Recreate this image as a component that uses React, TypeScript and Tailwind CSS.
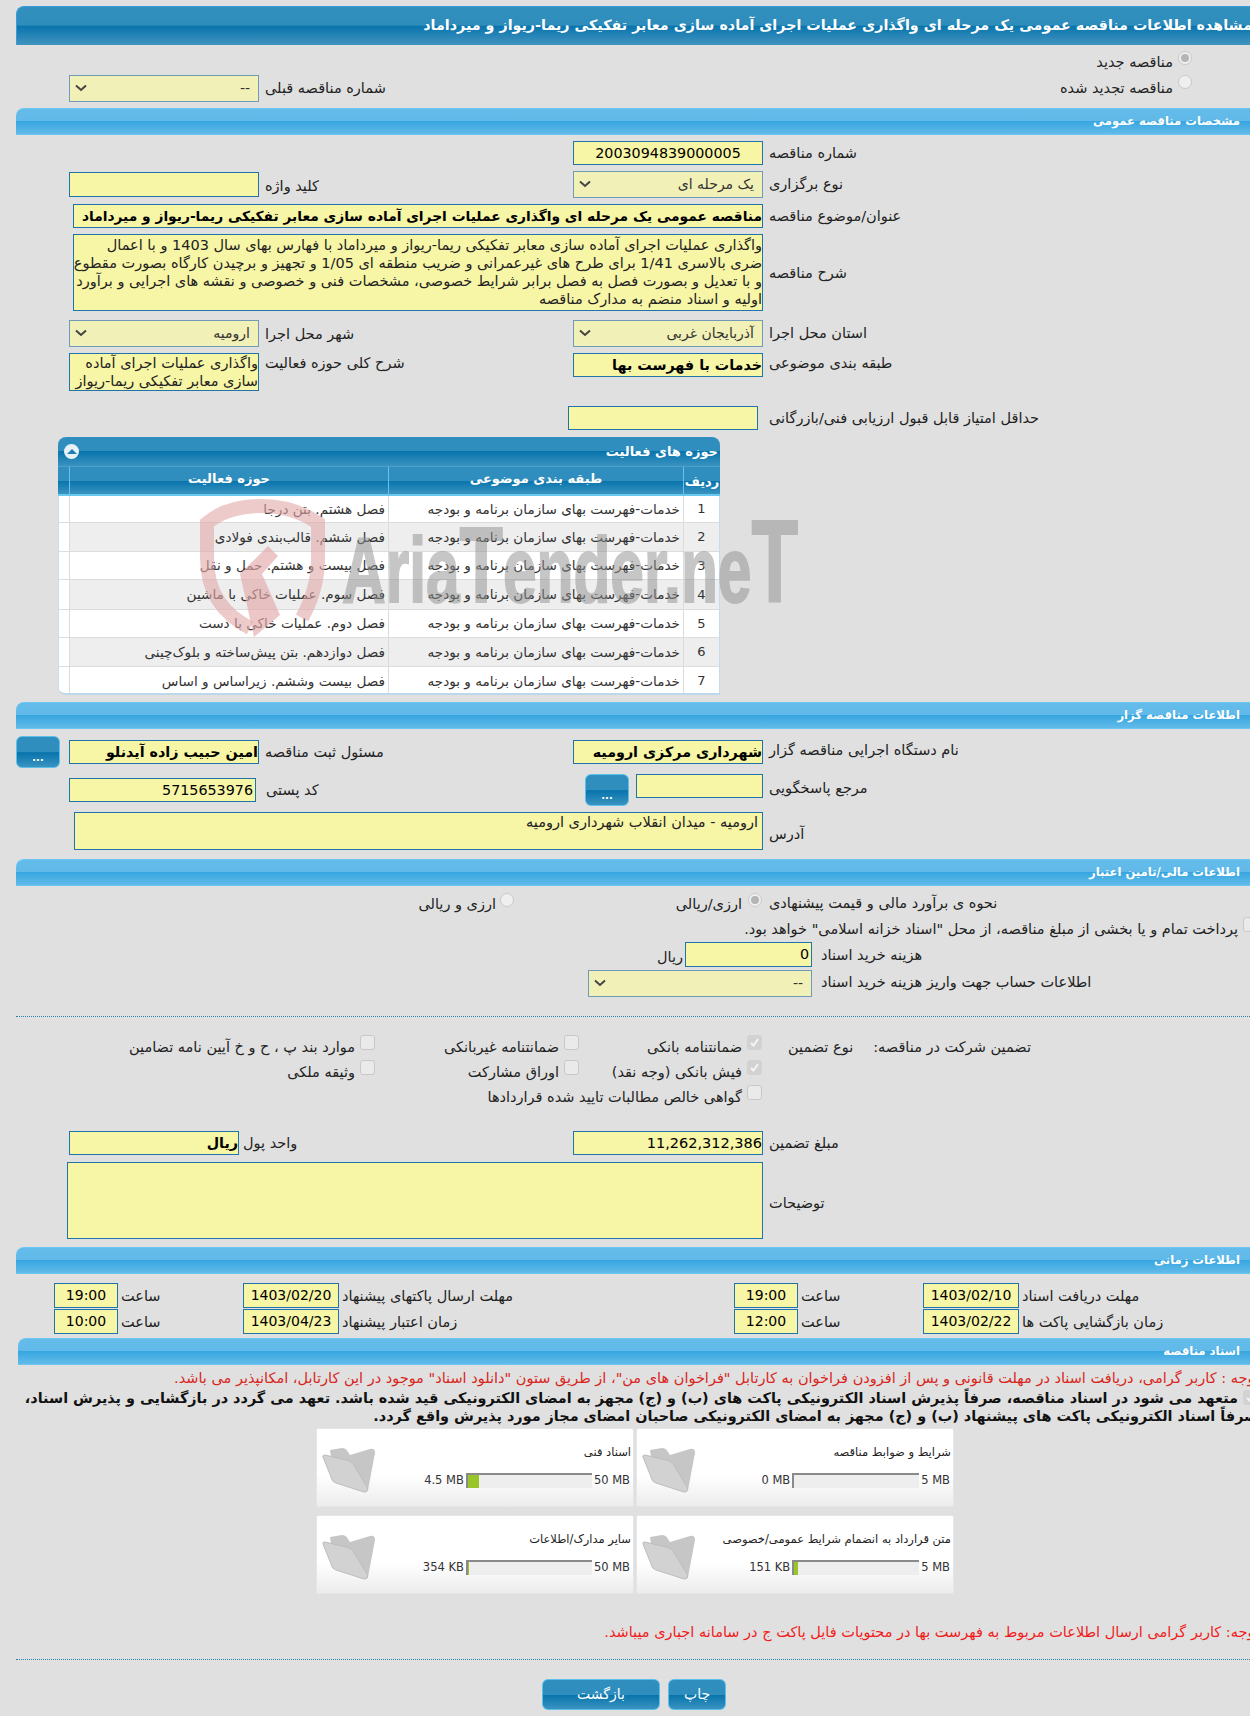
import type { ReactNode } from "react";

const font = "font-['DejaVu_Sans',sans-serif]";

function SectionBar({ title, className = "" }: { title: string; className?: string }) {
    return (
        <div className={`ml-[16px] h-[27px] rounded-tl-[8px] border-t border-[#6cc6f2] border-b bg-[linear-gradient(#63bcea_0%,#60b9e8_48%,#37a6e0_50%,#62bbe9_100%)] flex items-center justify-end pr-[24px] ${className}`}>
            <span dir="rtl" className="text-white font-bold text-[11.6px]">{title}</span>
        </div>
    );
}

function Label({ children, className = "" }: { children: ReactNode; className?: string }) {
    return <div dir="rtl" className={`w-fit whitespace-nowrap text-[14.5px] leading-[18px] text-[#222] ${className}`}>{children}</div>;
}

function Field({ children, className = "", bold = false }: { children?: ReactNode; className?: string; bold?: boolean }) {
    return (
        <div dir="rtl" className={`h-[24px] border border-[#1f75a8] bg-[#f7f5a6] text-[14.3px] leading-[22px] text-black whitespace-nowrap overflow-hidden ${bold ? "font-bold" : ""} ${className}`}>
            {children}
        </div>
    );
}

function SelectBox({ value, className = "" }: { value: string; className?: string }) {
    return (
        <div className={`h-[27px] border border-[#6f9ab8] bg-[#f1f0b6] flex items-center justify-between pl-[5px] pr-[8px] ${className}`}>
            <svg width="12" height="8" viewBox="0 0 12 8" className="mt-[-2px]">
                <polyline points="1,1.5 6,6 11,1.5" fill="none" stroke="#444" strokeWidth="2" />
            </svg>
            <span dir="rtl" className="text-[14px] text-[#333] whitespace-nowrap">{value}</span>
        </div>
    );
}

function Radio({ checked = false }: { checked?: boolean }) {
    return (
        <span className="inline-flex w-[14px] h-[14px] shrink-0 rounded-full border border-[#c9c9c9] bg-[#efefef] items-center justify-center">
            {checked && <span className="w-[8px] h-[8px] rounded-full bg-[#b5b5b5]" />}
        </span>
    );
}

function Check({ checked = false, className = "" }: { checked?: boolean; className?: string }) {
    return (
        <span className={`inline-flex w-[15px] h-[15px] shrink-0 rounded-[3px] border items-center justify-center ${checked ? "bg-[#d2d2d2] border-[#d2d2d2]" : "bg-[#eaeaea] border-[#c8c8c8]"} ${className}`}>
            {checked && (
                <svg width="11" height="11" viewBox="0 0 11 11">
                    <polyline points="2,6 4.5,8.5 9,2" fill="none" stroke="#f5f5f5" strokeWidth="2" />
                </svg>
            )}
        </span>
    );
}

function TwoCol({ children, className = "" }: { children: ReactNode; className?: string }) {
    return <div className={`grid grid-cols-[69px_190px_314px_190px_1fr] ${className}`}>{children}</div>;
}

function DarkBtn({ children, className = "" }: { children: ReactNode; className?: string }) {
    return (
        <div dir="rtl" className={`rounded-[6px] border border-[#5cc0ea] bg-[linear-gradient(#2f8ebd_0%,#2f8ebd_50%,#0874ac_52%,#3a93c0_100%)] text-white flex items-center justify-center text-[14px] ${className}`}>
            {children}
        </div>
    );
}

function Folder() {
    return (
        <svg width="54" height="46" viewBox="0 0 54 46" className="shrink-0">
            <path d="M8 3 L20 1 Q24 1 26 5 L28 8 L48 2 Q53 1 53 6 L46 43 Q45 46 41 44 L12 32 Z" fill="#c6c6c6" />
            <path d="M1 10 Q0 8 3 8 L24 13 Q30 14 33 20 L45 40 Q47 45 42 45 L14 36 Q10 35 9 30 Z" fill="#d2d2d2" stroke="#bdbdbd" strokeWidth="1" />
        </svg>
    );
}

function DocCard({ title, used, max, fill, barW }: { title: string; used: string; max: string; fill: number; barW: string }) {
    return (
        <div className="h-[79px] flex rounded-[2px] border border-[#e6e6e6] bg-[linear-gradient(#ffffff_0%,#ffffff_60%,#ececec_100%)]">
            <div className="pl-[5px] pt-[18px]"><Folder /></div>
            <div className="flex-1 flex flex-col items-end pr-[2px]">
                <div dir="rtl" className="mt-[15px] text-[11.5px] leading-[16px] text-[#222] whitespace-nowrap">{title}</div>
                <div className="mt-[12px] flex items-center gap-[2px] text-[11.5px] text-[#333] whitespace-nowrap pr-[1px]">
                    <span>{used}</span>
                    <div className={`h-[15px] ${barW} bg-[#eeeeee] border-t-2 border-l-2 border-[#8a8a8a]`}>
                        <div className="h-full bg-[#98c628]" style={{ width: `${fill}%` }} />
                    </div>
                    <span>{max}</span>
                </div>
            </div>
        </div>
    );
}

const activityRows = [
    "فصل هشتم. بتن درجا",
    "فصل ششم. قالب‌بندی فولادی",
    "فصل بیست و هشتم. حمل و نقل",
    "فصل سوم. عملیات خاکی با ماشین",
    "فصل دوم. عملیات خاکی با دست",
    "فصل دوازدهم. بتن پیش‌ساخته و بلوک‌چینی",
    "فصل بیست وششم. زیراساس و اساس",
];

const rowHeights = ["h-[27px]", "h-[29px]", "h-[28px]", "h-[30px]", "h-[28px]", "h-[29px]", "h-[28px]"];

function ActivityPanel() {
    return (
        <div className="ml-[58px] mt-[7px] w-[662px] h-[258px] rounded-t-[8px] rounded-bl-[8px] overflow-hidden border-b-2 border-[#bcd8ea]">
            <div className="h-[30px] flex items-center justify-between pl-[6px] pr-[2px] border-b border-[#4f9fc9] bg-[linear-gradient(#2f8ebd_0%,#2f8ebd_48%,#0874ac_50%,#3a93c0_100%)]">
                <span className="w-[15px] h-[15px] rounded-full bg-[#e8f1f6] flex items-center justify-center">
                    <span className="w-0 h-0 border-x-[5px] border-x-transparent border-b-[5px] border-b-[#1d7fb3]" />
                </span>
                <span dir="rtl" className="text-white font-bold text-[13px]">حوزه های فعالیت</span>
            </div>
            <div className="grid grid-cols-[12px_319px_295px_36px] h-[29px] border-b-2 border-[#68c8ee] bg-[linear-gradient(#2f8ebd_0%,#2f8ebd_50%,#0874ac_52%,#3a93c0_100%)] text-white font-bold text-[13px] text-center">
                <div className="border-r border-[#6cbfe6]" />
                <div dir="rtl" className="border-r border-[#6cbfe6] leading-[24px]">حوزه فعالیت</div>
                <div dir="rtl" className="border-r border-[#6cbfe6] leading-[24px]">طبقه بندی موضوعی</div>
                <div dir="rtl" className="leading-[30px]">ردیف</div>
            </div>
            <div className="border-x border-[#c7dcea]">
                {activityRows.map((row, i) => (
                    <div key={row} className={`grid grid-cols-[11px_319px_295px_35px] ${rowHeights[i]} bg-white text-[13.6px] text-[#333] border-b border-[#dcdcdc] last:border-b-0`}>
                        <div className="border-r border-[#dcdcdc]" />
                        <div dir="rtl" className={`border-r border-[#dcdcdc] px-[3px] flex items-center whitespace-nowrap ${i % 2 ? "bg-[#eeeeee]" : ""}`}>{row}</div>
                        <div dir="rtl" className={`border-r border-[#dcdcdc] px-[3px] flex items-center whitespace-nowrap ${i % 2 ? "bg-[#eeeeee]" : ""}`}>خدمات-فهرست بهای سازمان برنامه و بودجه</div>
                        <div className={`flex items-center justify-center text-[13px] ${i % 2 ? "bg-[#eeeeee]" : ""}`}>{i + 1}</div>
                    </div>
                ))}
            </div>
        </div>
    );
}

function Watermark() {
    return (
        <svg width="620" height="150" viewBox="0 0 620 150" className="absolute left-[190px] top-[490px] pointer-events-none">
            <path d="M112 128 C122 110 128 90 128 68 L128 33 C112 22 94 16 72 16 C50 16 30 22 17 33 L17 68 C17 105 35 125 60 138" fill="none" stroke="#e3a9a9" strokeWidth="14" opacity="0.6" />
            <path d="M50 84 L78 56 L88 66 L72 84 L90 125 L64 147 Z" fill="#e3a9a9" opacity="0.65" />
            <text x="152" y="112" textLength="456" lengthAdjust="spacingAndGlyphs" fontFamily="Liberation Sans" fontWeight="700" fontSize="92" fill="#8f8f8f" stroke="#8f8f8f" strokeWidth="2" opacity="0.5">
                Aria<tspan fontSize="108">T</tspan>ender.ne<tspan fontSize="116">T</tspan>
            </text>
        </svg>
    );
}

function TimeRow({ date, time, label, date2, time2, label2, className = "" }: { date: string; time: string; label: string; date2: string; time2: string; label2: string; className?: string }) {
    const cell = "h-[25px] text-center px-0 leading-[23px] !text-[14px]";
    return (
        <div className={`grid grid-cols-[54px_64px_125px_96px_395px_64px_125px_96px_1fr] ${className}`}>
            <div />
            <Field className={cell}>{time2}</Field>
            <Label className="ml-[3px] mt-[4px]">ساعت</Label>
            <Field className={cell}>{date2}</Field>
            <Label className="ml-[3px] mt-[4px]">{label2}</Label>
            <Field className={cell}>{time}</Field>
            <Label className="ml-[3px] mt-[4px]">ساعت</Label>
            <Field className={cell}>{date}</Field>
            <Label className="ml-[3px] mt-[4px]">{label}</Label>
        </div>
    );
}

function GuaranteeItem({ label, checked = false, width }: { label: string; checked?: boolean; width: string }) {
    return (
        <div className={`flex items-start gap-[5px] ${width}`}>
            <Check checked={checked} className="mt-[-3px]" />
            <span className="text-[14.5px] leading-[18px] text-[#222] whitespace-nowrap">{label}</span>
        </div>
    );
}

export default function App() {
    return (
        <div className={`relative w-[1250px] h-[1716px] overflow-hidden bg-[#e0e0e0] ${font}`}>
            <div className="w-[1264px]">
                <div className="pt-[6px]">
                    <div className="ml-[16px] h-[39px] rounded-tl-[8px] border-t border-l border-[#3a9bdc] bg-[linear-gradient(#3190be_0%,#2e8dbb_48%,#0874ac_50%,#4394bf_100%)] flex items-center justify-end pr-[12px]">
                        <span dir="rtl" className="text-white font-bold text-[14.3px] whitespace-nowrap">مشاهده اطلاعات مناقصه عمومی یک مرحله ای واگذاری عملیات اجرای آماده سازی معابر تفکیکی ریما-ریواز و میرداماد</span>
                    </div>
                </div>

                <div className="h-[24px] mt-[6px] flex justify-end pr-[72px] gap-[5px] items-start">
                    <Label className="mt-[2px]">مناقصه جدید</Label>
                    <Radio checked />
                </div>
                <div className="flex h-[27px]">
                    <SelectBox value="--" className="ml-[69px] w-[190px]" />
                    <Label className="ml-[6px] mt-[4px]">شماره مناقصه قبلی</Label>
                    <div className="flex-1 flex justify-end pr-[72px] gap-[5px] items-start">
                        <Label className="mt-[4px]">مناقصه تجدید شده</Label>
                        <Radio />
                    </div>
                </div>

                <SectionBar title="مشخصات مناقصه عمومی" className="mt-[6px]" />

                <TwoCol className="mt-[6px]">
                    <div className="col-span-3" />
                    <Field className="text-center">2003094839000005</Field>
                    <Label className="ml-[6px] mt-[3px]">شماره مناقصه</Label>
                </TwoCol>
                <TwoCol className="mt-[6px]">
                    <div />
                    <Field className="mt-[1px] h-[25px]" />
                    <Label className="ml-[6px] mt-[6px]">کلید واژه</Label>
                    <SelectBox value="یک مرحله ای" />
                    <Label className="ml-[6px] mt-[4px]">نوع برگزاری</Label>
                </TwoCol>
                <div className="flex mt-[6px]">
                    <Field bold className="ml-[73px] w-[690px] !text-[13.8px]">مناقصه عمومی یک مرحله ای واگذاری عملیات اجرای آماده سازی معابر تفکیکی ریما-ریواز و میرداماد</Field>
                    <Label className="ml-[6px] mt-[3px]">عنوان/موضوع مناقصه</Label>
                </div>
                <div className="flex mt-[6px]">
                    <div dir="rtl" className="ml-[73px] w-[690px] h-[77px] border border-[#1f75a8] bg-[#f7f5a6] text-[14.5px] leading-[18px] text-[#222] whitespace-nowrap overflow-hidden pt-[1px]">
                        واگذاری عملیات اجرای آماده سازی معابر تفکیکی ریما-ریواز و میرداماد با فهارس بهای سال 1403 و با اعمال<br />
                        ضری بالاسری 1/41 برای طرح های غیرعمرانی و ضریب منطقه ای 1/05 و تجهیز و برچیدن کارگاه بصورت مقطوع<br />
                        و با تعدیل و بصورت فصل به فصل برابر شرایط خصوصی، مشخصات فنی و خصوصی و نقشه های اجرایی و برآورد<br />
                        اولیه و اسناد منضم به مدارک مناقصه
                    </div>
                    <Label className="ml-[6px] mt-[30px]">شرح مناقصه</Label>
                </div>
                <TwoCol className="mt-[9px]">
                    <div />
                    <SelectBox value="ارومیه" />
                    <Label className="ml-[6px] mt-[5px]">شهر محل اجرا</Label>
                    <SelectBox value="آذربایجان غربی" />
                    <Label className="ml-[6px] mt-[4px]">استان محل اجرا</Label>
                </TwoCol>
                <TwoCol className="mt-[6px]">
                    <div />
                    <div dir="rtl" className="h-[38px] border border-[#1f75a8] bg-[#f7f5a6] text-[14.5px] leading-[18px] text-[#222] whitespace-nowrap overflow-hidden">
                        واگذاری عملیات اجرای آماده<br />سازی معابر تفکیکی ریما-ریواز
                    </div>
                    <Label className="ml-[6px] mt-[1px]">شرح کلی حوزه فعالیت</Label>
                    <Field bold>خدمات با فهرست بها</Field>
                    <Label className="ml-[6px] mt-[1px]">طبقه بندی موضوعی</Label>
                </TwoCol>
                <div className="flex mt-[15px]">
                    <Field className="ml-[568px] w-[190px]" />
                    <Label className="ml-[11px] mt-[3px]">حداقل امتیاز قابل قبول ارزیابی فنی/بازرگانی</Label>
                </div>

                <ActivityPanel />

                <SectionBar title="اطلاعات مناقصه گزار" className="mt-[7px] h-[26px]" />

                <div className="flex mt-[7px]">
                    <DarkBtn className="ml-[16px] w-[44px] h-[32px] font-bold !text-[10px] pt-[10px]">...</DarkBtn>
                    <div className="ml-[9px] mt-[4px] flex-1">
                        <div className="grid grid-cols-[190px_314px_190px_1fr]">
                            <Field bold>امین حبیب زاده آیدنلو</Field>
                            <Label className="ml-[6px] mt-[3px]">مسئول ثبت مناقصه</Label>
                            <Field bold>شهرداری مرکزی ارومیه</Field>
                            <Label className="ml-[6px] mt-[1px]">نام دستگاه اجرایی مناقصه گزار</Label>
                        </div>
                    </div>
                </div>
                <div className="flex mt-[6px]">
                    <Field className="ml-[69px] w-[187px] mt-[4px] pr-[2px]">5715653976</Field>
                    <div className="ml-[10px] w-[60px] shrink-0 mt-[7px]"><Label>کد پستی</Label></div>
                    <DarkBtn className="ml-[259px] w-[44px] h-[32px] font-bold !text-[10px] pt-[10px]">...</DarkBtn>
                    <Field className="ml-[7px] w-[127px]" />
                    <Label className="ml-[6px] mt-[5px]">مرجع پاسخگویی</Label>
                </div>
                <div className="flex mt-[6px]">
                    <div dir="rtl" className="ml-[74px] w-[689px] h-[38px] border border-[#1f75a8] bg-[#f7f5a6] text-[14.5px] leading-[18px] text-[#222] pr-[4px]">ارومیه - میدان انقلاب شهرداری ارومیه</div>
                    <Label className="ml-[6px] mt-[13px]">آدرس</Label>
                </div>

                <SectionBar title="اطلاعات مالی/تامین اعتبار" className="mt-[9px]" />

                <div className="flex mt-[7px] h-[24px] items-start">
                    <div className="flex ml-[420px] w-[94px] gap-[4px] justify-end">
                        <Label className="mt-[2px]">ارزی و ریالی</Label>
                        <Radio />
                    </div>
                    <div className="flex ml-[163px] w-[85px] gap-[6px] justify-end">
                        <Label className="mt-[2px]">ارزی/ریالی</Label>
                        <Radio checked />
                    </div>
                    <Label className="ml-[7px] mt-[1px]">نحوه ی برآورد مالی و قیمت پیشنهادی</Label>
                </div>
                <div className="flex justify-end items-start mt-[3px] pr-[6px] gap-[5px] h-[18px]">
                    <Label>پرداخت تمام و یا بخشی از مبلغ مناقصه، از محل "اسناد خزانه اسلامی" خواهد بود.</Label>
                    <Check className="mt-[-3px]" />
                </div>
                <div className="flex mt-[4px]">
                    <div className="ml-[650px] w-[33px] shrink-0 mt-[6px] flex justify-end"><Label>ریال</Label></div>
                    <Field className="ml-[2px] w-[127px] h-[25px] pr-[2px]">0</Field>
                    <Label className="ml-[9px] mt-[4px]">هزینه خرید اسناد</Label>
                </div>
                <div className="flex mt-[3px]">
                    <SelectBox value="--" className="ml-[588px] w-[224px] h-[26px]" />
                    <Label className="ml-[9px] mt-[3px]">اطلاعات حساب جهت واریز هزینه خرید اسناد</Label>
                </div>

                <div className="ml-[16px] mt-[19px] border-t border-dotted border-[#2a80b0]" />

                <div className="grid grid-cols-[762px_1fr] mt-[21px]">
                    <div dir="rtl" className="flex">
                        <GuaranteeItem checked width="w-[183px]" label="ضمانتنامه بانکی" />
                        <GuaranteeItem width="w-[204px]" label="ضمانتنامه غیربانکی" />
                        <GuaranteeItem width="w-[250px]" label="موارد بند پ ، ح و خ آیین نامه تضامین" />
                    </div>
                    <div className="flex">
                        <Label className="ml-[26px]">نوع تضمین</Label>
                        <Label className="ml-[20px]">تضمین شرکت در مناقصه:</Label>
                    </div>
                </div>
                <div dir="rtl" className="flex w-[762px] mt-[7px]">
                    <GuaranteeItem checked width="w-[183px]" label="فیش بانکی (وجه نقد)" />
                    <GuaranteeItem width="w-[204px]" label="اوراق مشارکت" />
                    <GuaranteeItem width="w-[250px]" label="وثیقه ملکی" />
                </div>
                <div dir="rtl" className="flex w-[762px] mt-[7px]">
                    <GuaranteeItem width="w-[400px]" label="گواهی خالص مطالبات تایید شده قراردادها" />
                </div>

                <TwoCol className="mt-[25px]">
                    <div />
                    <Field bold className="w-[170px]">ریال</Field>
                    <Label className="ml-[-16px] mt-[3px]">واحد پول</Label>
                    <Field className="!text-[14.5px]">11,262,312,386</Field>
                    <Label className="ml-[6px] mt-[3px]">مبلغ تضمین</Label>
                </TwoCol>
                <div className="flex mt-[7px]">
                    <div className="ml-[67px] w-[696px] h-[77px] border border-[#1f75a8] bg-[#f7f5a6]" />
                    <Label className="ml-[6px] mt-[32px]">توضیحات</Label>
                </div>

                <SectionBar title="اطلاعات زمانی" className="mt-[8px]" />

                <TimeRow className="mt-[9px]" time2="19:00" date2="1403/02/20" label2="مهلت ارسال پاکتهای پیشنهاد" time="19:00" date="1403/02/10" label="مهلت دریافت اسناد" />
                <TimeRow className="mt-[1px]" time2="10:00" date2="1403/04/23" label2="زمان اعتبار پیشنهاد" time="12:00" date="1403/02/22" label="زمان بازگشایی پاکت ها" />

                <SectionBar title="اسناد مناقصه" className="mt-[4px] !ml-[18px]" />

                <div dir="rtl" className="mt-[4px] pr-[5px] text-[14.5px] leading-[18px] text-[#d9261c] whitespace-nowrap">
                    توجه : کاربر گرامی، دریافت اسناد در مهلت قانونی و پس از افزودن فراخوان به کارتابل "فراخوان های من"، از طریق ستون "دانلود اسناد" موجود در این کارتابل، امکانپذیر می باشد.
                </div>
                <div dir="rtl" className="mt-[2px] pr-[6px] text-[14.4px] leading-[18px] font-bold text-[#111] whitespace-nowrap">
                    <Check checked className="mb-[-2px] ml-[5px] mr-[0px]" />
                    متعهد می شود در اسناد مناقصه، صرفاً پذیرش اسناد الکترونیکی پاکت های (ب) و (ج) مجهز به امضای الکترونیکی قید شده باشد. تعهد می گردد در بازگشایی و پذیرش اسناد،<br />
                    صرفاً اسناد الکترونیکی پاکت های پیشنهاد (ب) و (ج) مجهز به امضای الکترونیکی صاحبان امضای مجاز مورد پذیرش واقع گردد.
                </div>

                <div className="ml-[316px] w-[638px] mt-[3px] grid grid-cols-[318px_318px] gap-x-[2px] gap-y-[8px]">
                    <DocCard title="اسناد فنی" used="4.5 MB" max="50 MB" fill={9} barW="w-[126px]" />
                    <DocCard title="شرایط و ضوابط مناقصه" used="0 MB" max="5 MB" fill={0} barW="w-[127px]" />
                    <DocCard title="سایر مدارک/اطلاعات" used="354 KB" max="50 MB" fill={1} barW="w-[126px]" />
                    <DocCard title="متن قرارداد به انضمام شرایط عمومی/خصوصی" used="151 KB" max="5 MB" fill={3} barW="w-[127px]" />
                </div>

                <div dir="rtl" className="mt-[29px] pr-[5px] text-[14.5px] leading-[18px] text-[#f01c1c] whitespace-nowrap">
                    توجه: کاربر گرامی ارسال اطلاعات مربوط به فهرست بها در محتویات فایل پاکت ج در سامانه اجباری میباشد.
                </div>

                <div className="ml-[16px] mt-[18px] border-t border-dotted border-[#2a80b0]" />

                <div className="flex ml-[542px] mt-[19px] gap-[8px]">
                    <DarkBtn className="w-[118px] h-[31px]">بازگشت</DarkBtn>
                    <DarkBtn className="w-[58px] h-[31px]">چاپ</DarkBtn>
                </div>
            </div>
            <Watermark />
        </div>
    );
}
